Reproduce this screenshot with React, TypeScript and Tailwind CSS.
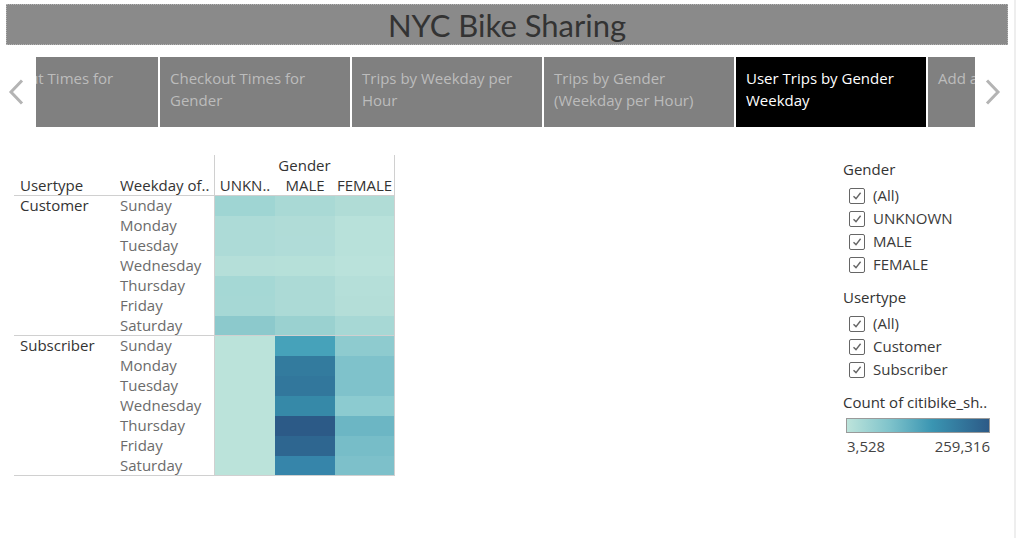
import { Fragment } from "react";

const FONT = { fontFamily: "'Open Sans', Arial, sans-serif" };

const tabs = [
  { label: "Checkout Times for Users", active: false },
  { label: "Checkout Times for Gender", active: false },
  { label: "Trips by Weekday per Hour", active: false },
  { label: "Trips by Gender (Weekday per Hour)", active: false },
  { label: "User Trips by Gender Weekday", active: true },
  { label: "Add a Story", active: false },
];

const days = ["Sunday", "Monday", "Tuesday", "Wednesday", "Thursday", "Friday", "Saturday"];

// colours per row: UNKNOWN, MALE, FEMALE
const groups = [
  {
    name: "Customer",
    cells: [
      ["#9fd5d3", "#a9d9d5", "#b0dcd6"],
      ["#addbd7", "#b0dcd7", "#b8e1da"],
      ["#addbd7", "#b0dcd8", "#b8e1da"],
      ["#b5dfd9", "#b6e0d9", "#bae2db"],
      ["#a5d8d5", "#acdad6", "#b5dfd9"],
      ["#a6d8d5", "#acdad6", "#b4ded8"],
      ["#8cc9cc", "#9ad1d0", "#a7d8d5"],
    ],
  },
  {
    name: "Subscriber",
    cells: [
      ["#bbe3da", "#46a2ba", "#8ecbcf"],
      ["#bbe3da", "#337b9e", "#7fc2cb"],
      ["#bbe3da", "#32779c", "#7fc2cb"],
      ["#bbe3da", "#3689a8", "#8ccbd0"],
      ["#bbe3da", "#2c5a87", "#6cb6c4"],
      ["#bbe3da", "#2e6690", "#77bdc8"],
      ["#bbe3da", "#3685aa", "#7dc0ca"],
    ],
  },
];

const Chevron = ({ dir }: { dir: "left" | "right" }) => (
  <svg width="16" height="26" viewBox="0 0 16 26" fill="none">
    <path
      d={dir === "left" ? "M14 1.5 L3 13 L14 24.5" : "M2 1.5 L13 13 L2 24.5"}
      stroke="#b4b4b4"
      strokeWidth="3"
    />
  </svg>
);

const CheckBox = ({ label }: { label: string }) => (
  <div className="flex items-center h-[23px] pl-[6px]">
    <div className="w-[16px] h-[16px] border border-[#666] rounded-[2px] flex items-center justify-center bg-white">
      <svg width="10" height="10" viewBox="0 0 10 10" fill="none">
        <path d="M1.5 5.2 L4 7.6 L8.6 1.8" stroke="#666" strokeWidth="1.4" />
      </svg>
    </div>
    <span className="ml-[8px] text-[15px] text-[#3a3a3a]">{label}</span>
  </div>
);

export default function App() {
  return (
    <div className="w-[1016px] h-[538px] bg-white overflow-hidden flex" style={FONT}>
      <div className="flex-1 flex flex-col">
        {/* title */}
        <div className="mx-[6px] mt-[4px] h-[41px] bg-[#8a8a8a] border border-dotted border-[#b2b2b2] flex items-center justify-center">
          <span className="text-[31px] text-[#333] leading-none pt-[1px]" style={{ fontFamily: "Lato, sans-serif" }}>
            NYC Bike Sharing
          </span>
        </div>

        {/* story tabs */}
        <div className="flex mt-[12px] h-[70px]">
          <div className="w-[36px] flex items-center justify-center pr-[4px]">
            <Chevron dir="left" />
          </div>
          <div className="w-[939px] overflow-hidden">
            <div className="flex gap-[2px] ml-[-68px]">
              {tabs.map((t) => (
                <div
                  key={t.label}
                  className={`w-[190px] h-[70px] shrink-0 px-[10px] pt-[10px] text-[15px] leading-[22px] ${
                    t.active ? "bg-black text-white" : "bg-[#808080] text-[#bcbcbc]"
                  }`}
                >
                  {t.label}
                </div>
              ))}
            </div>
          </div>
          <div className="flex-1 flex items-center justify-center pr-[4px]">
            <Chevron dir="right" />
          </div>
        </div>

        <div className="flex">
          {/* crosstab */}
          <div className="ml-[14px] mt-[28px] w-[381px] text-[15px]">
            <div className="flex h-[20px] leading-[20px]">
              <div className="w-[200px]" />
              <div className="w-[181px] border-l border-r border-[#d0d0d0] text-center text-[#333]">Gender</div>
            </div>
            <div className="flex h-[21px] leading-[20px] border-b border-[#d0d0d0] text-[#333]">
              <div className="w-[100px] pl-[6px]">Usertype</div>
              <div className="w-[100px] pl-[6px] whitespace-nowrap">Weekday of..</div>
              <div className="w-[181px] border-l border-r border-[#d0d0d0] flex">
                <div className="w-[60px] text-center">UNKN..</div>
                <div className="w-[60px] text-center">MALE</div>
                <div className="w-[59px] text-center">FEMALE</div>
              </div>
            </div>
            {groups.map((g) => (
              <div key={g.name} className="flex h-[140px] overflow-hidden border-b border-[#d0d0d0]">
                <div className="w-[100px] pl-[6px] leading-[18px] text-[#333]">{g.name}</div>
                <div className="w-[100px] pl-[6px]">
                  {days.map((d) => (
                    <div key={d} className="h-[20px] leading-[18px] text-[#6b6b6b]">
                      {d}
                    </div>
                  ))}
                </div>
                <div className="w-[181px] border-l border-r border-[#d0d0d0] grid grid-cols-[60px_60px_59px] content-start">
                  {g.cells.map((row, i) => (
                    <Fragment key={i}>
                      {row.map((c, j) => (
                        <div key={j} className="h-[20px]" style={{ backgroundColor: c }} />
                      ))}
                    </Fragment>
                  ))}
                </div>
              </div>
            ))}
          </div>

          <div className="flex-1" />

          {/* filters and legend */}
          <div className="w-[171px] mt-[32px] text-[15px]">
            <div className="h-[20px] leading-[20px] text-[#333]">Gender</div>
            <div className="mt-[5px]">
              <CheckBox label="(All)" />
              <CheckBox label="UNKNOWN" />
              <CheckBox label="MALE" />
              <CheckBox label="FEMALE" />
            </div>
            <div className="mt-[11px] h-[20px] leading-[20px] text-[#333]">Usertype</div>
            <div className="mt-[5px]">
              <CheckBox label="(All)" />
              <CheckBox label="Customer" />
              <CheckBox label="Subscriber" />
            </div>
            <div className="mt-[11px] h-[20px] leading-[20px] text-[#333] whitespace-nowrap">Count of citibike_sh..</div>
            <div className="mt-[6px] ml-[3px] w-[144px] h-[15px] border border-[#9a9a9a] bg-[linear-gradient(to_right,#bde4db,#7fc3cb_30%,#3a95b2_60%,#2c5a87)]" />
            <div className="mt-[3px] ml-[4px] w-[143px] flex justify-between h-[20px] leading-[20px] text-[#444]">
              <span>3,528</span>
              <span>259,316</span>
            </div>
          </div>
        </div>
      </div>
      <div className="w-[2px] bg-[#eeeeee]" />
    </div>
  );
}
